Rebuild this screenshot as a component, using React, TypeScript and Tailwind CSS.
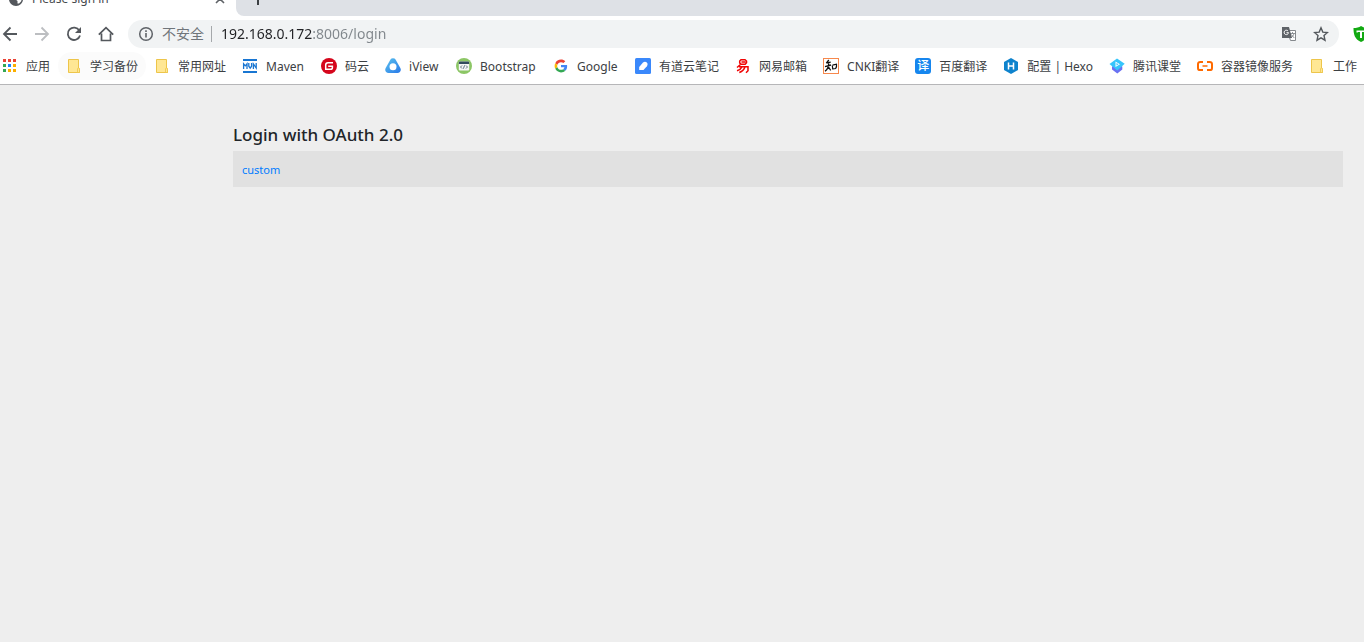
import type { ReactNode } from "react";

const svgProps = { width: 16, height: 16, viewBox: "0 0 16 16", "aria-hidden": true, className: "block shrink-0" } as const;

const Folder = () => (
  <svg {...svgProps}>
    <path d="M2.5 1.5h10v8.500a1.500 1.500 0 0 1 1 1.500v3h-11z" fill="#ffe794" stroke="#edc54a" />
    <path d="M11.500 11v3.500h2V11a1 1 0 0 0-2 0z" fill="#ffe794" stroke="#edc54a" strokeWidth=".8" />
  </svg>
);

const Apps = () => (
  <svg {...svgProps}>
    {["#ea4335", "#ea4335", "#ea4335", "#34a853", "#1a85ff", "#fbaf00", "#34a853", "#fbaf00", "#fbaf00"].map((c, i) => (
      <rect key={i} x={1 + (i % 3) * 5} y={1 + Math.floor(i / 3) * 5} width="3" height="3" fill={c} />
    ))}
  </svg>
);

const Maven = () => (
  <svg {...svgProps}>
    <path d="M1 1h14v2H1zM1 13h14v2H1z" fill="#1976d2" />
    <path d="M1.600 11V5.800l1.700 2 1.700-2V11M6.800 5v3.200L8.200 10.200l1.400-2V5M11.400 11V6l2.800 4V5" fill="none" stroke="#1976d2" strokeWidth="1.300" />
  </svg>
);

const Gitee = () => (
  <svg {...svgProps}>
    <circle cx="8" cy="8" r="8" fill="#d5061c" />
    <path d="M12 4.700H7A2.300 2.300 0 0 0 4.700 7v4.300h4.800a1.900 1.900 0 0 0 1.900-1.900V8.200H7.200" fill="none" stroke="#fff" strokeWidth="1.500" />
  </svg>
);

const IView = () => (
  <svg {...svgProps}>
    <defs>
      <linearGradient id="iview" x1="0" y1="0" x2="1" y2="1">
        <stop offset="0" stopColor="#5cc3ee" />
        <stop offset="1" stopColor="#2878e8" />
      </linearGradient>
    </defs>
    <path d="M5.300 1.700a3.200 3.200 0 0 1 5.400 0l4.600 8.300c1.300 2.400-.2 5-2.900 5H3.600C.900 15-.600 12.400.700 10z" fill="url(#iview)" />
    <circle cx="8" cy="8.700" r="3.500" fill="#fff" />
  </svg>
);

const BootstrapIcon = () => (
  <svg {...svgProps}>
    <circle cx="8" cy="8" r="8" fill="#8cc665" />
    <rect x="2.800" y="3.500" width="10.400" height="9" rx="1" fill="#f4f5f5" />
    <path d="M2.800 6V4.500a1 1 0 0 1 1-1h8.400a1 1 0 0 1 1 1V6z" fill="#324a5e" />
    <path d="M6 7.500 4.500 9 6 10.500M10 7.500 11.500 9 10 10.500M8.600 7.300l-1.200 3.400" fill="none" stroke="#53657a" strokeWidth=".9" />
  </svg>
);

const Google = () => (
  <svg {...svgProps} viewBox="-6 -6 60 60">
    <path fill="#EA4335" d="M24 9.500c3.540 0 6.710 1.220 9.210 3.600l6.850-6.850C35.900 2.380 30.470 0 24 0 14.620 0 6.510 5.380 2.560 13.220l7.980 6.190C12.430 13.720 17.740 9.500 24 9.500z" />
    <path fill="#4285F4" d="M46.980 24.550c0-1.570-.15-3.090-.38-4.550H24v9.020h12.940c-.58 2.960-2.260 5.480-4.780 7.180l7.730 6c4.510-4.180 7.090-10.360 7.090-17.650z" />
    <path fill="#FBBC05" d="M10.530 28.590c-.48-1.450-.76-2.990-.76-4.590s.27-3.140.76-4.590l-7.980-6.190C.92 16.460 0 20.120 0 24c0 3.880.92 7.540 2.560 10.780l7.970-6.190z" />
    <path fill="#34A853" d="M24 48c6.480 0 11.930-2.130 15.890-5.810l-7.730-6c-2.150 1.450-4.920 2.300-8.160 2.300-6.260 0-11.570-4.220-13.470-9.910l-7.980 6.190C6.510 42.620 14.620 48 24 48z" />
  </svg>
);

const Youdao = () => (
  <svg {...svgProps}>
    <rect width="16" height="16" rx="1.500" fill="#3a88fb" />
    <path d="M4.200 12V9L8 4.500c1.200-1 2.800-.9 3.800 0 1 1 1 2.500.1 3.700L8.500 12z" fill="#fff" />
  </svg>
);

const NetEase = () => (
  <svg {...svgProps}>
    <path d="M6 1.700h4L11.500 3v1.700L10.200 6.200H6L4.700 4.900V3zM6.500 4h4" fill="none" stroke="#f00505" strokeWidth="1.500" />
    <path d="M5.500 6.500 2 9.500M4 8.700h9v4l-2 2M7 8.800C6 10.800 4.300 12 2 12.700M10 8.800c-.8 2.900-2.800 4.700-5.700 5.700" fill="none" stroke="#f00505" strokeWidth="1.500" />
  </svg>
);

const Cnki = () => (
  <svg {...svgProps}>
    <rect x=".5" y=".5" width="15" height="15" fill="#fff" stroke="#f7884c" />
    <path d="M5.800 2 3.300 5.200M3.500 5l4.200-.9M2 8.700l6-1.700M5.700 4.500c.1 4-1 7-3.700 8.800M5.500 9l2.200 3.300" fill="none" stroke="#111" strokeWidth="1.300" />
    <path d="M9.300 7.500l.5 3.800M9.500 7.200l4-1c.3 2-.1 3.300-.8 4.300l-3 .5" fill="none" stroke="#111" strokeWidth="1.200" />
  </svg>
);

const Baidu = () => (
  <span aria-hidden="true" className="flex h-4 w-4 shrink-0 items-center justify-center rounded-[3px] bg-[#1686ee] text-[12px] leading-none font-medium text-white">
    译
  </span>
);

const Hexo = () => (
  <svg {...svgProps}>
    <path d="m8 0 7 4v8l-7 4-7-4V4z" fill="#0e83cd" />
    <path d="M5.500 4.500v7M10.500 4.500v7M5.500 8h5" stroke="#fff" strokeWidth="1.500" />
  </svg>
);

const Tencent = () => (
  <svg {...svgProps}>
    <path d="M3 8.500 8.300 6l5 2.500v3L8.300 15.500 3 11.500z" fill="#6a70f2" />
    <path d="M8 .500 15.700 5.800 8.300 12.500.500 6z" fill="#36c5fb" />
    <path d="M6.500 3.500v5.500l4.500-2.700z" fill="#fff" />
    <path d="m7.500 5 2 1.200-2 1.300z" fill="#36c5fb" />
  </svg>
);

const Aliyun = () => (
  <svg {...svgProps}>
    <path d="M6 3.900H3.200A2.200 2.200 0 0 0 1 6.100v3.800a2.200 2.200 0 0 0 2.200 2.200H6M10 3.900h2.800A2.200 2.200 0 0 1 15 6.100v3.800a2.200 2.200 0 0 1-2.200 2.200H10" fill="none" stroke="#ff6a00" strokeWidth="2" />
    <path d="M5.500 8h5" stroke="#ff6a00" strokeWidth="1.500" />
  </svg>
);

const bookmarks: { label: string; icon: ReactNode; active?: boolean; width?: string }[] = [
  { label: "应用", icon: <Apps /> },
  { label: "学习备份", icon: <Folder />, active: true },
  { label: "常用网址", icon: <Folder /> },
  { label: "Maven", icon: <Maven />, width: "min-w-[39px]" },
  { label: "码云", icon: <Gitee /> },
  { label: "iView", icon: <IView />, width: "min-w-[31px]" },
  { label: "Bootstrap", icon: <BootstrapIcon />, width: "min-w-[57px]" },
  { label: "Google", icon: <Google />, width: "min-w-[42px]" },
  { label: "有道云笔记", icon: <Youdao /> },
  { label: "网易邮箱", icon: <NetEase /> },
  { label: "CNKI翻译", icon: <Cnki /> },
  { label: "百度翻译", icon: <Baidu /> },
  { label: "配置 | Hexo", icon: <Hexo /> },
  { label: "腾讯课堂", icon: <Tencent /> },
  { label: "容器镜像服务", icon: <Aliyun /> },
  { label: "工作", icon: <Folder /> },
];

function TabStrip() {
  return (
    <div className="flex h-4 overflow-hidden bg-white">
      <div className="flex w-[236px] shrink-0 items-end">
        <div className="flex h-[34px] w-full items-center gap-2 pr-2 pl-2">
          <svg {...svgProps}>
            <circle cx="8" cy="8" r="6.300" fill="#54585d" stroke="#54585d" strokeWidth="1.500" />
            <path d="M8.500 2.500a5.500 5.500 0 0 1 4.500 8l-2 2H9.500V10L7 8V5h1.500z" fill="#fff" />
          </svg>
          <span className="flex-1 text-[12px] leading-4 text-[#45494d]">Please sign in</span>
          <button type="button" aria-label="Close tab">
            <svg {...svgProps}>
              <path d="m4 4 8 8M12 4l-8 8" stroke="#5f6368" strokeWidth="1.600" />
            </svg>
          </button>
        </div>
      </div>
      <div className="flex flex-1 items-end rounded-bl-lg bg-[#dee1e6] pl-3.5">
        <button type="button" aria-label="New tab" className="flex h-[34px] items-center">
          <svg {...svgProps}>
            <path d="M8 2v12M2 8h12" stroke="#3c4043" strokeWidth="2" />
          </svg>
        </button>
      </div>
    </div>
  );
}

function Toolbar() {
  return (
    <div className="flex h-9 items-center overflow-hidden pl-0.5">
      <div className="flex shrink-0 gap-4 pr-3.5">
        <button type="button" aria-label="Back">
          <svg {...svgProps}>
            <path d="M15 8H2.500M8.500 1.500 2 8l6.500 6.500" fill="none" stroke="#54585d" strokeWidth="1.800" />
          </svg>
        </button>
        <button type="button" aria-label="Forward">
          <svg {...svgProps}>
            <path d="M1 8h12.500M7.500 1.500 14 8l-6.500 6.500" fill="none" stroke="#bcbec1" strokeWidth="1.800" />
          </svg>
        </button>
        <button type="button" aria-label="Reload">
          <svg {...svgProps}>
            <path d="M13.300 4.500A6.200 6.200 0 1 0 14 9.500" fill="none" stroke="#54585d" strokeWidth="1.800" />
            <path d="M15 1v6H9z" fill="#54585d" />
          </svg>
        </button>
        <button type="button" aria-label="Home">
          <svg {...svgProps}>
            <path d="M.800 8.700 8 1.700l7.200 7M3.500 7.500v7h9v-7" fill="none" stroke="#54585d" strokeWidth="1.700" />
          </svg>
        </button>
      </div>
      <div className="flex h-7 min-w-0 flex-1 items-center rounded-full bg-[#f1f3f4] px-2.5">
        <svg {...svgProps}>
          <circle cx="8" cy="8" r="6.300" fill="none" stroke="#5f6368" strokeWidth="1.500" />
          <path d="M7.200 7h1.600v4.500H7.200zM7.200 4.300h1.600v1.600H7.200z" fill="#5f6368" />
        </svg>
        <span className="ml-2 shrink-0 text-[14px] leading-5 text-[#70757a]">不安全</span>
        <span className="ml-[7px] h-4 w-px shrink-0 bg-[#a5a8ab]" />
        <input
          type="text"
          aria-label="Address"
          defaultValue="192.168.0.172:8006/login"
          className="ml-[9px] min-w-0 flex-1 bg-[linear-gradient(to_right,#202124_92px,#80868b_92px)] bg-clip-text text-[14px] leading-5 text-transparent outline-none"
        />
        <div className="flex shrink-0 gap-4">
          <button type="button" aria-label="Translate this page">
            <svg {...svgProps}>
              <path d="M7.500 4.500h7v10H9.500l-1-3" fill="#fff" stroke="#85898d" />
              <path d="M9 7.500h5M11.500 6v1.500M13 7.500c-.5 2-1.700 3.500-3.500 4.500M10.300 8.500l3 3.500" fill="none" stroke="#85898d" strokeWidth=".9" />
              <path d="M1 1h7l3 11H1z" fill="#5f6368" />
              <path d="M7 5A2.200 2.200 0 1 0 7.500 6.700H5.500" fill="none" stroke="#fff" />
            </svg>
          </button>
          <button type="button" aria-label="Bookmark this page">
            <svg {...svgProps}>
              <path d="m8 1.800 1.800 4.300 4.700.4L11 9.600l1 4.600-4-2.400-4 2.400 1-4.600-3.500-3.100 4.700-.4z" fill="none" stroke="#54585d" strokeWidth="1.400" />
            </svg>
          </button>
        </div>
      </div>
      <button type="button" aria-label="Extension" className="ml-3.5 w-[11px] shrink-0 overflow-hidden">
        <svg {...svgProps}>
          <path d="M8 0c2 1.500 4.500 2 7.500 2 0 6-1 11-7.500 14C1.500 13 .500 8 .500 2 3.500 2 6 1.500 8 0z" fill="#12a912" />
          <path d="M3.500 4.500h9v2h-1.300V6H9v6H7V6H4.800v.5H3.500z" fill="#fff" />
        </svg>
      </button>
    </div>
  );
}

function BookmarksBar() {
  return (
    <nav aria-label="Bookmarks" className="flex h-[33px] items-start overflow-hidden border-b border-[#b6b6b8]">
      {bookmarks.map(({ label, icon, active, width }, i) => (
        <a
          key={i}
          href="#"
          className={`flex h-7 shrink-0 items-center gap-2 rounded-full text-[12px] leading-4 whitespace-nowrap text-[#3c4043] ${i === 0 ? "pr-2 pl-0.5" : "px-2"} ${active ? "bg-[#fbfbfb]" : ""}`}
        >
          {icon}
          <span className={`pt-0.5 ${width ?? ""}`}>{label}</span>
        </a>
      ))}
    </nav>
  );
}

export default function App() {
  return (
    <div className="flex min-h-screen flex-col bg-[#eeeeee] font-['Noto_Sans','Noto_Sans_CJK_SC',sans-serif]">
      <header className="bg-white">
        <TabStrip />
        <Toolbar />
        <BookmarksBar />
      </header>
      <main className="pt-[38px] pr-[21px] pl-[233px]">
        <h2 className="mb-1 text-[17px] leading-6 font-medium text-[#212529]">Login with OAuth 2.0</h2>
        <table className="w-full bg-[#e1e1e1]">
          <tbody>
            <tr>
              <td className="px-[9px] pt-[11px] pb-[9px] text-[11px] leading-4">
                <a href="#" className="text-[#007bff]">custom</a>
              </td>
            </tr>
          </tbody>
        </table>
      </main>
    </div>
  );
}
